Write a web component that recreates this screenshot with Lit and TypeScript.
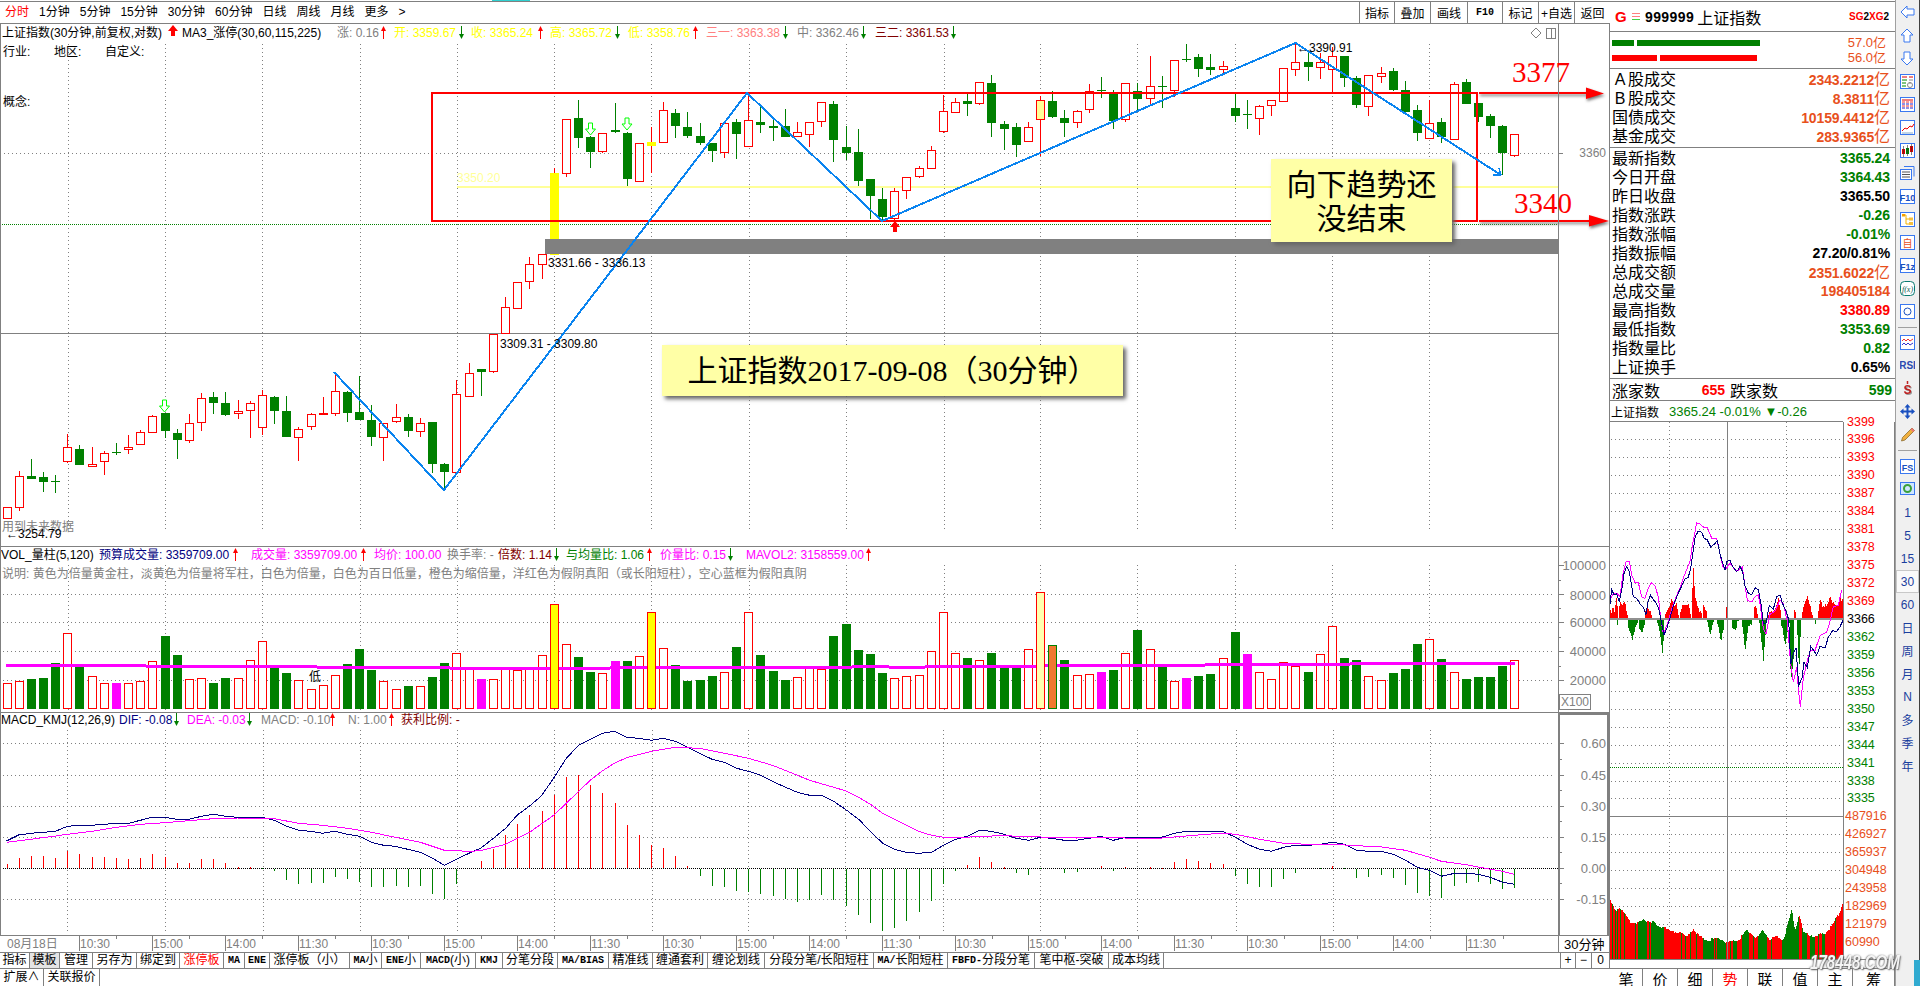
import { LitElement, html, svg, css } from "lit";
import { customElement } from "lit/decorators.js";

type C = [string, number, number, number, number];
// candles: [type, high, bodyTop, bodyBottom, low] measured at 3x the pixel height
const early: C[] = [
  ["r",532,532,565,565],["r",423,439,532,543],["g",387,438,446,446],["g",426,441,455,486],["g",435,453,455,488],
  ["r",312,352,395,400],["g",345,357,404,404],["r",351,403,409,409],["r",364,370,394,435],["g",339,366,369,375],
  ["r",316,352,358,372],["r",300,307,343,343],["r",255,259,307,307],["g",249,249,302,323],["g",297,309,329,387],
  ["r",252,280,331,338],["r",190,205,277,302],["g",186,201,218,252],["g",186,219,255,258],["r",210,244,250,267],
  ["r",213,220,241,324],["r",180,196,292,315],["g",199,201,242,282],["g",198,243,320,322],["r",292,296,319,393],
  ["r",250,253,289,300],["r",201,250,251,251],["r",130,184,250,258],["g",184,186,248,276],["g",139,246,269,270],
  ["g",225,270,320,348],["r",280,280,323,393],["r",222,262,275,280],["g",252,261,303,321],["r",265,280,304,321],
  ["g",276,276,402,430],["g",398,402,425,480],["r",151,193,428,430],["r",99,130,199,199],["g",118,118,125,197],
  ["r",13,13,124,128],
];
const later: C[] = [
  ["r",892,922,1000,1000],["r",847,847,925,925],["r",771,793,845,866],["r",763,763,793,836],["y",505,520,765,765],
  ["r",358,358,521,530],["g",300,354,413,444],["g",408,411,455,503],["r",400,400,455,458],["g",310,391,396,399],
  ["g",395,399,537,558],["r",430,430,545,545],["y",381,426,437,518],["r",306,331,426,430],["g",327,339,378,414],
  ["g",336,381,408,414],["g",369,408,430,434],["g",430,430,453,486],["r",370,370,458,474],["g",357,366,402,477],
  ["r",283,361,440,440],["g",320,366,375,399],["g",357,378,384,423],["g",327,378,411,411],["r",366,397,410,410],
  ["r",366,367,404,441],["r",307,307,365,381],["g",303,312,420,486],["g",378,441,459,481],["g",387,456,543,558],
  ["g",537,537,588,657],["g",564,597,651,660],["r",565,574,656,660],["r",532,532,571,597],["r",498,505,530,533],
  ["r",438,451,506,506],["r",285,334,395,398],["r",294,307,337,337],["g",282,303,312,348],["r",247,247,311,315],
  ["g",225,249,369,411],["g",363,372,387,450],["g",369,381,435,471],["r",366,381,423,426],["p",288,300,356,468],
  ["g",273,303,351,354],["g",330,354,369,411],["r",330,333,365,384],["r",252,273,326,339],["g",231,270,273,294],
  ["g",270,282,363,387],["r",248,249,358,366],["g",250,273,297,330],["r",168,259,296,312],["g",228,258,261,324],
  ["r",181,181,271,291],["g",132,177,180,186],["g",162,171,207,231],["g",162,201,210,225],["r",183,198,206,225],
  ["g",282,324,348,366],["g",300,342,345,387],["r",315,319,355,405],["r",300,301,317,348],["r",203,203,301,301],
  ["r",130,187,208,228],["g",160,187,201,243],["r",160,187,203,236],["r",140,169,208,280],["g",168,168,233,261],
  ["g",228,234,315,324],["r",226,226,320,348],["r",201,219,228,249],["g",205,213,270,272],["g",243,270,336,336],
  ["g",314,330,399,423],["r",300,369,414,414],["g",354,366,411,429],["r",246,252,416,416],["g",237,246,312,312],
  ["g",309,309,350,366],["g",342,348,378,414],["g",375,378,460,525],["r",402,402,466,470],
];
const candles: C[] = [...early.map((c): C => [c[0], c[1]+990, c[2]+990, c[3]+990, c[4]+990]), ...later];

const vols: [string, number][] = [
  ["r",1060],["r",1054],["g",1047],["g",1044],["g",999],["r",910],["g",1005],["r",1039],["r",1060],["m",1060],
  ["r",1060],["r",1054],["r",994],["g",918],["g",975],["r",1048],["r",1045],["g",1059],["g",1044],["r",1045],
  ["r",991],["r",934],["g",1012],["g",1029],["r",1051],["r",1078],["r",1066],["r",1036],["g",1002],["g",957],
  ["g",1020],["r",1054],["r",1078],["g",1068],["r",1069],["g",1041],["g",999],["r",970],["r",1017],["m",1047],
  ["r",1048],["r",1017],["r",1020],["r",1017],["r",976],["y",822],["r",943],["g",981],["g",1026],["r",1030],
  ["m",993],["g",993],["r",979],["y",846],["r",955],["g",1005],["g",1052],["g",1050],["g",1038],["r",1027],
  ["g",951],["r",847],["g",975],["g",1023],["g",1050],["r",1042],["r",1010],["r",1018],["g",918],["g",882],
  ["g",960],["g",972],["g",1029],["r",1045],["r",1039],["r",1036],["r",964],["r",847],["r",970],["g",984],
  ["r",991],["g",969],["g",1010],["g",1010],["r",958],["p",787],["o",945],["g",990],["r",1036],["r",1033],
  ["m",1026],["g",1020],["r",970],["g",900],["r",958],["g",1010],["r",1053],["m",1044],["g",1038],["g",1032],
  ["r",985],["g",906],["m",972],["r",1027],["r",1048],["r",997],["r",1009],["g",1026],["r",973],["r",889],
  ["g",984],["g",990],["r",1039],["r",1051],["g",1029],["g",1017],["g",942],["r",928],["g",987],["r",1027],
  ["g",1047],["g",1041],["g",1041],["g",1008],["r",991],
];
const volLine: [number, number, number][] = [
  [6,146,1006],[146,317,1009],[317,450,1012],[450,551,1015],[556,610,1015],[610,640,1012],
  [640,852,1012],[852,889,1009],[889,925,1012],[925,1037,1008],[1043,1205,1005],[1205,1350,1003],[1350,1515,1000],
];
const macdTips = [492,474,468,468,474,454,462,471,471,474,477,474,462,471,489,489,477,477,489,500,502,505,512,540,551,549,549,530,537,546,561,561,558,561,557,582,597,552,505,482,447,405,372,345,333,285,231,226,255,279,309,375,405,435,444,468,498,528,558,561,573,576,582,588,597,606,600,585,600,618,645,669,693,684,663,636,603,552,513,495,471,486,502,518,525,505,508,519,516,503,498,512,502,505,502,503,486,477,483,489,492,528,552,561,561,537,519,508,505,498,505,534,531,525,534,555,579,588,594,558,549,546,552,567,564];
const difA = [[13,423],[36,405],[60,400],[85,397],[109,394],[132,379],[156,376],[180,376],[204,373],[228,370],[252,370],[275,361],[298,352],[322,352],[346,358],[370,358],[395,349],[418,343],[442,349],[466,352],[490,352],[514,352],[538,361],[562,379],[585,391],[609,394],[632,400],[656,394],[681,403],[705,409],[728,427],[752,436],[775,439],[799,448],[824,457],[848,475],[871,496],[895,478],[919,460],[942,445],[967,415],[991,385],[1014,345],[1038,318],[1061,288],[1085,235],[1110,175],[1134,136],[1157,118],[1181,100],[1204,94],[1228,112],[1252,115],[1277,121],[1300,115],[1324,124],[1347,142],[1371,160],[1396,178],[1420,187],[1444,205],[1467,214],[1491,226],[1514,244],[1540,262],[1563,277]];
const difB = [[19,286],[42,286],[66,304],[89,328],[115,358],[138,394],[162,430],[185,448],[209,457],[232,460],[258,457],[281,436],[305,418],[328,409],[352,391],[375,394],[400,403],[424,415],[448,421],[471,412],[494,415],[518,421],[542,421],[566,415],[590,409],[614,421],[638,412],[661,412],[685,412],[709,412],[733,400],[757,394],[781,394],[805,394],[828,394],[854,412],[877,433],[901,448],[924,454],[948,442],[971,436],[996,436],[1020,433],[1044,427],[1068,433],[1091,451],[1114,454],[1140,454],[1163,463],[1187,481],[1210,502],[1234,511],[1257,529],[1283,520],[1306,520],[1330,523],[1353,532],[1377,547],[1400,553]];
const deaA = [[13,427],[60,418],[109,408],[132,403],[180,394],[228,382],[275,373],[322,368],[370,362],[418,356],[466,354],[514,354],[538,356],[585,370],[632,376],[681,385],[728,397],[775,412],[824,427],[871,451],[919,454],[942,452],[991,433],[1038,397],[1085,346],[1110,310],[1134,274],[1157,241],[1181,212],[1204,190],[1228,173],[1277,154],[1324,142],[1371,145],[1420,160],[1467,175],[1514,196],[1563,226]];
const deaB = [[19,241],[66,262],[89,272],[115,292],[138,313],[162,340],[185,358],[209,376],[232,394],[258,406],[281,412],[305,414],[352,409],[400,407],[448,410],[494,412],[542,414],[590,412],[638,414],[709,414],[757,408],[805,402],[828,400],[854,403],[901,418],[948,430],[996,433],[1044,433],[1091,437],[1140,441],[1187,451],[1234,472],[1257,484],[1306,494],[1353,508],[1377,514],[1400,523]];
const macdPts = (a: number[][], b: number[][]) => [
  ...a.map(p => `${(p[0]/1.96).toFixed(1)},${(700+p[1]/3).toFixed(1)}`),
  ...b.map(p => `${(800+p[0]/1.96).toFixed(1)},${(700+p[1]/3).toFixed(1)}`),
].join(" ");

const iNavy = [[30,490],[35,450],[42,465],[50,462],[58,485],[66,445],[72,405],[80,385],[88,400],[95,440],[100,470],[110,475],[120,490],[130,500],[138,520],[145,480],[152,466],[160,478],[170,490],[178,510],[188,560],[192,578],[200,560],[210,530],[222,490],[235,460],[245,440],[255,420],[265,415],[272,390],[278,350],[286,300],[295,285],[305,288],[312,305],[322,310],[332,330],[345,320],[352,312],[360,350],[368,375],[375,395],[380,370],[390,368],[398,385],[410,400],[420,385],[428,400],[435,440],[445,460],[455,465],[465,445],[475,450],[483,490],[490,545],[498,545],[508,495],[520,505],[530,470],[540,466],[548,490],[558,510],[566,535],[572,660],[580,630],[588,615],[596,720],[606,700],[612,655],[622,670],[632,610],[640,620],[650,635],[660,610],[675,615],[685,585],[698,565],[708,570],[720,555],[730,535]];
const iMag = [[30,480],[40,460],[50,460],[60,470],[68,410],[78,372],[88,370],[95,410],[105,430],[115,430],[125,470],[135,475],[145,445],[155,430],[165,440],[175,470],[182,530],[190,575],[205,540],[220,490],[240,445],[255,405],[270,370],[278,320],[290,262],[300,265],[312,275],[322,275],[335,305],[350,305],[358,340],[368,385],[378,392],[390,375],[405,395],[415,395],[427,385],[435,440],[442,480],[455,485],[465,470],[475,465],[480,490],[490,560],[498,575],[510,520],[525,510],[540,480],[550,490],[562,540],[572,660],[580,710],[590,670],[596,740],[601,780],[610,700],[622,650],[632,620],[645,622],[660,580],[680,570],[690,540],[700,498],[715,495],[725,450]];
const iX = (x: number) => 1600 + x / 3;
const iY = (y: number) => 430 + y / 2.82;
const iPts = (a: number[][]) => a.map(p => `${iX(p[0]).toFixed(1)},${iY(p[1]).toFixed(1)}`).join(" ");

const interp = (pts: number[][], x: number) => {
  for (let i = 0; i < pts.length - 1; i++) {
    if (x >= pts[i][0] && x <= pts[i+1][0]) {
      const t = (x - pts[i][0]) / ((pts[i+1][0] - pts[i][0]) || 1);
      return pts[i][1] + t * (pts[i+1][1] - pts[i][1]);
    }
  }
  return null;
};
const jit = (i: number) => Math.sin(i * 12.9898) * 43758.5453 % 1;

const redRegions = [
  [[30,495],[34,520],[38,500],[44,515],[50,470],[54,525]],
  [[58,490],[62,480],[66,495],[72,480],[78,505],[82,525]],
  [[135,520],[140,505],[150,505],[155,525]],
  [[195,520],[205,500],[215,480],[222,500],[230,490],[236,525]],
  [[240,510],[248,490],[256,495],[265,495],[272,525]],
  [[275,480],[280,390],[285,465],[292,490],[300,510],[306,525]],
  [[310,500],[318,510],[322,525]],
  [[378,490],[383,525]],
  [[462,500],[468,490],[473,525]],
  [[505,515],[512,505],[525,510],[535,480],[543,525]],
  [[582,510],[588,525]],
  [[605,515],[615,490],[622,475],[630,500],[640,525]],
  [[653,525],[660,480],[668,505],[680,490],[690,465],[700,490],[712,500],[720,480],[730,470]],
];
const greenRegions = [
  [[50,537],[53,555],[56,537]],
  [[85,555],[98,590],[106,560],[115,537]],
  [[115,565],[125,570],[135,545]],
  [[172,540],[180,575],[187,625],[192,575]],
  [[320,540],[330,580],[342,540]],
  [[352,540],[362,590],[372,560]],
  [[395,550],[405,560],[415,540]],
  [[425,540],[435,620],[445,550],[460,540]],
  [[478,540],[485,600],[490,645],[497,560]],
  [[543,540],[555,610],[565,560]],
  [[568,540],[572,715],[580,640]],
  [[590,540],[597,690],[603,540]],
  [[645,537],[647,568],[649,537]],
];
const volEnv = [[330,60],[345,90],[360,82],[375,105],[390,125],[410,130],[430,122],[455,125],[475,140],[495,140],[510,155],[540,155],[560,172],[580,145],[600,170],[620,180],[660,175],[680,187],[700,183],[720,175],[740,150],[770,175],[790,150],[810,178],[830,170],[850,178],[875,90],[885,150],[897,100],[910,160],[950,170],[980,155],[1000,130],[1020,95],[1028,65],[1030,25]];
const volGreen = [[415,440],[452,490],[610,640],[650,678],[700,710],[725,745],[775,800],[845,895],[905,920],[930,945],[965,975]];
const volStripes = [336,345,352,360,372,405,448,545,555,572,590,645,690,760,815,955,1005];

const legendMain: [number, string, string][] = [
  [2,"上证指数(30分钟,前复权,对数)","k"],[182,"MA3_涨停(30,60,115,225)","k"],[337,"涨: 0.16","a"],
  [394,"开: 3359.67","y"],[471,"收: 3365.24","y"],[550,"高: 3365.72","y"],[628,"低: 3358.76","y"],
  [706,"三一: 3363.38","s"],[797,"中: 3362.46","a"],[875,"三二: 3361.53","d"],
];
const legendVol: [number, string, string][] = [
  [1,"VOL_量柱(5,120)","k"],[99,"预算成交量: 3359709.00","n"],[251,"成交量: 3359709.00","m"],[374,"均价: 100.00","m"],
  [447,"换手率: -","a"],[498,"倍数: 1.14","d"],[566,"与均量比: 1.06","g"],[660,"价量比: 0.15","m"],[746,"MAVOL2: 3158559.00","m"],
];
const legendMacd: [number, string, string][] = [
  [1,"MACD_KMJ(12,26,9)","k"],[119,"DIF: -0.08","n"],[187,"DEA: -0.03","m"],[261,"MACD: -0.10","a"],[348,"N: 1.00","a"],[401,"获利比例: -","d"],
];
const gridX = [68,165,262,360,457,554,651,749,846,944,1040,1137,1235,1332,1429];
const gapA = [79,152,225,298,371,444,517,590,663,736,809,882,955,1028,1101,1174,1247,1320,1393,1466];
const timeL = ["10:30","15:00","14:00","11:30","10:30","15:00","14:00","11:30","10:30","15:00","14:00","11:30","10:30","15:00","14:00","11:30","10:30","15:00","14:00","11:30"];

const tabs1: [string, number, string?][] = [
  ["指标",30],["模板",30,"sel"],["管理",33],["另存为",44],["绑定到",43],["涨停板",44,"red"],["MA",21],["ENE",25],["涨停板（小）",80],
  ["MA小",32],["ENE小",39],["MACD(小)",55],["KMJ",27],["分笔分段",55],["MA/BIAS",51],["精准线",44],["缠通套利",55],["缠论划线",57],
  ["分段分笔/长阳短柱",109],["MA/长阳短柱",74],["FBFD-分段分笔",87],["笔中枢-突破",74],["成本均线",55],
];
const navItems = ["1分钟","5分钟","15分钟","30分钟","60分钟","日线","周线","月线","更多"];
const rightBtns: [string, number][] = [["指标",35],["叠加",36],["画线",37],["F10",35],["标记",36],["+自选",36],["返回",36]];

const rows1: [string, string, string][] = [["A","股成交","2343.2212"],["B","股成交","8.3811"],["","国债成交","10159.4412"],["","基金成交","283.9365"]];
const rows2: [string, string, string][] = [
  ["最新指数","3365.24","gr"],["今日开盘","3364.43","gr"],["昨日收盘","3365.50","bk"],["指数涨跌","-0.26","gr"],["指数涨幅","-0.01%","gr"],
  ["指数振幅","27.20/0.81%","bk"],["总成交额","2351.6022亿","or"],["总成交量","198405184","or"],["最高指数","3380.89","rd"],["最低指数","3353.69","gr"],
  ["指数量比","0.82","gr"],["上证换手","0.65%","bk"],
];
const priceL = ["3399","3396","3393","3390","3387","3384","3381","3378","3375","3372","3369","3366","3362","3359","3356","3353","3350","3347","3344","3341","3338","3335"];
const volL = ["487916","426927","365937","304948","243958","182969","121979","60990"];
const sideLabels = ["1","5","15","30","60","日","周","月","N","多","季","年"];

const cxOf = (i: number) => Math.round(6.5 + 12.16 * i);
const up = (x: number, y: number, c = "#f00") => svg`<path d="M${x+.5} ${y+6}V${y-5}" stroke=${c} fill="none"/><path d="M${x-2} ${y-2}L${x+.5} ${y-7}L${x+3} ${y-2}Z" fill=${c}/>`;
const dn = (x: number, y: number, c = "#008000") => svg`<path d="M${x+.5} ${y-7}V${y+4}" stroke=${c} fill="none"/><path d="M${x-2} ${y+1}L${x+.5} ${y+6}L${x+3} ${y+1}Z" fill=${c}/>`;
const thick = (x: number, y: number) => svg`<path d="M${x} ${y}l5 6h-3v5h-4v-5h-3z" fill="#f00"/>`;
const hollow = (x: number, y: number) => svg`<path d="M${x-2} ${y-6}h4v6h3l-5 6l-5-6h3z" fill="#fff" stroke="#0f0"/>`;
const legendText = (l: [number, string, string][], y: number) => l.map(([x, t, c]) => svg`<text x=${x} y=${y} class="t ${c}">${t}</text>`);

const icons = [
  svg`<path d="M1 7l6-6v3h7v6H7v3z" fill="#fff" stroke="#3a78f0"/>`,
  svg`<path d="M7 1l6 6h-3v7H4V7H1z" fill="#fff" stroke="#3a78f0"/>`,
  svg`<path d="M7 14l6-6h-3V1H4v7H1z" fill="#fff" stroke="#3a78f0"/>`,
  svg`<rect x=".5" y=".5" width="14" height="14" fill="#fff" stroke="#3a78f0"/><path d="M2 3h5M9 3h4" stroke="#d00"/><path d="M2 6h5M2 9h4M2 12h4" stroke="#080"/><path d="M9 6h4M9 9h2" stroke="#888"/><circle cx="10" cy="11" r="2.5" fill="none" stroke="#888"/>`,
  svg`<rect x=".5" y=".5" width="14" height="14" fill="#fff" stroke="#3a78f0"/><path d="M2 3h11" stroke="#d00"/><path d="M2 5h3M6 5h3M10 5h3M2 9h3M6 9h3M10 9h3" stroke="#e33"/><path d="M2 7h3M6 7h3M10 7h3M2 11h3M6 11h3M10 11h3" stroke="#22c"/>`,
  svg`<rect x=".5" y=".5" width="14" height="14" fill="#fff" stroke="#3a78f0"/><path d="M2 11l3-3 2 1 3-3 2 1 2-3" fill="none" stroke="#e00"/><path d="M2 13h11" stroke="#8ac"/>`,
  svg`<rect x=".5" y=".5" width="14" height="14" fill="#fff" stroke="#3a78f0"/><rect x="2" y="6" width="3" height="5" fill="#d00"/><rect x="6" y="5" width="3" height="6" fill="#080"/><rect x="10" y="3" width="3" height="6" fill="#d00"/><path d="M3.5 3v11M7.5 2v11M11.500 1v11" stroke="#333" stroke-width=".6"/>`,
  svg`<path d="M4 .5h10v10" fill="none" stroke="#3a78f0"/><rect x=".5" y="3.500" width="11" height="10" fill="#fff" stroke="#3a78f0"/><path d="M2 6h8M2 8.500h8M2 11h8" stroke="#555"/>`,
  svg`<rect x=".5" y=".5" width="14" height="14" fill="#fff" stroke="#3a78f0"/><text x="7.500" y="11.500" text-anchor="middle" class="ic">F10</text>`,
  svg`<rect x=".5" y=".5" width="14" height="14" fill="#fff" stroke="#3a78f0"/><path d="M3 3h3v9h5M6 7h5" fill="none" stroke="#f5b400"/><rect x="2" y="2" width="3" height="2.500" fill="#f5a000"/><rect x="9" y="5.500" width="4" height="3" fill="#f5c040"/><rect x="9" y="10" width="4" height="3" fill="#f5c040"/>`,
  svg`<rect x=".5" y=".5" width="14" height="14" fill="#fff" stroke="#3a78f0"/><text x="7.500" y="11.500" text-anchor="middle" class="io">自</text>`,
  svg`<rect x=".5" y=".5" width="14" height="14" fill="#fff" stroke="#3a78f0"/><text x="7.500" y="11.500" text-anchor="middle" class="ic">F1z</text>`,
  svg`<rect x=".5" y=".5" width="14" height="14" rx="4" fill="#fff" stroke="#0a7a70"/><text x="7.500" y="11" text-anchor="middle" class="if">f(x)</text>`,
  svg`<rect x=".5" y=".5" width="14" height="14" fill="#fff" stroke="#3a78f0"/><circle cx="7.500" cy="7.500" r="3.500" fill="none" stroke="#1a50c0"/>`,
];
const icons2 = [
  svg`<rect x=".5" y=".5" width="14" height="14" fill="#fff" stroke="#3a78f0"/><path d="M2 6l2-2 2 2 2-2 2 2 3-2" fill="none" stroke="#e33"/><path d="M2 10l2-2 2 2 2-2 2 2 3-2" fill="none" stroke="#33c"/>`,
  svg`<text x="7.500" y="11" text-anchor="middle" class="ir">RSI</text>`,
  svg`<path d="M7.500 0v3" stroke="#c02020" stroke-width="1.500"/><text x="7.500" y="12.500" text-anchor="middle" class="is">S</text>`,
  svg`<path d="M7.500 0l3 3.500h-2v3h3v-2l3.500 3-3.500 3v-2h-3v3h2l-3 3.500-3-3.500h2v-3h-3v2L0 7.500l3.500-3v2h3v-3h-2z" fill="#1a50c0"/>`,
  svg`<path d="M12 1l2.500 2.500L5 13l-3.500 1L2.500 10.500z" fill="#f0b040" stroke="#806020" stroke-width=".7"/><path d="M12 1l2.500 2.500-1.500 1.500L10.500 2.500z" fill="#e77"/>`,
];
const icons3 = [
  svg`<rect x=".5" y=".5" width="14" height="14" fill="#fff" stroke="#3a78f0"/><text x="7.500" y="11.500" text-anchor="middle" class="ic">FS</text>`,
  svg`<rect x=".5" y=".5" width="14" height="12" fill="#cfe6ff" stroke="#3a78f0"/><circle cx="7.500" cy="6.500" r="3.500" fill="none" stroke="#3aa03a" stroke-width="2"/>`,
];
const ic = (p: unknown) => html`<div class="tool"><svg width="15" height="15" viewBox="0 0 15 15">${p}</svg></div>`;

const latin = (t: string) => t.split(/([A-Za-z0-9][A-Za-z0-9/\-]*)/).map((s, i) => i % 2 ? html`<span class="lat">${s}</span>` : s);

@customElement("app-root")
export class AppRoot extends LitElement {
  static styles = css`
    :host { display: block; width: 1920px; height: 986px; overflow: hidden; background: #fff; color: #000; font: 12px "Liberation Sans", "Noto Sans CJK SC", sans-serif; }
    .root { position: relative; display: grid; grid-template-columns: 1610px 285px 25px; height: 986px; }
    .left { display: flex; flex-direction: column; min-width: 0; }
    .top { height: 23px; margin-top: 1px; border-top: 1px solid #808080; border-bottom: 1px solid #808080; box-sizing: border-box; display: flex; align-items: center; justify-content: space-between; padding-left: 5px; }
    .nav { display: flex; gap: 10px; align-items: center; font-size: 12px; line-height: 21px; }
    .nav .on { color: #f00; }
    .btns { display: flex; height: 100%; }
    .btn { box-sizing: border-box; display: flex; align-items: center; justify-content: center; border-left: 1px solid #808080; height: 100%; }
    .lat { font: bold 10px "Liberation Mono", monospace; }
    .pane { position: relative; display: block; }
    .pane svg { display: block; overflow: visible; }
    .main { height: 523px; }
    .vol { height: 166px; }
    .macd { height: 223px; }
    .ax { height: 16px; }
    svg text { font-family: "Liberation Sans", "Noto Sans CJK SC", sans-serif; font-size: 12px; }
    svg text.fs13 { font-size: 13px; }
    svg text.fs125 { font-size: 12.500px; }
    .t { dominant-baseline: central; }
    .k { fill: #000; } .a { fill: #808080; } .y { fill: #ff0; } .s { fill: #ff8080; } .d { fill: #800000; } .n { fill: #000080; } .m { fill: #f0f; } .g { fill: #008000; } .o { fill: #e8501c; } .r { fill: #f00; } .py { fill: #ffff99; }
    .dot { stroke: #808080; stroke-dasharray: 1 3; fill: none; shape-rendering: crispEdges; }
    .dotg { stroke: #008000; stroke-dasharray: 1 1; fill: none; shape-rendering: crispEdges; }
    .dotk { stroke: #000; stroke-dasharray: 1 1; fill: none; shape-rendering: crispEdges; }
    .crisp { shape-rendering: crispEdges; }
    .big { font-family: "Liberation Serif", serif !important; font-size: 29px !important; fill: #f00; }
    .shadow { filter: drop-shadow(1px 2px 1.500px #777); }
    .note { position: absolute; box-sizing: border-box; background: #ffffa6; box-shadow: 3px 3px 4px #666; display: flex; align-items: center; justify-content: center; text-align: center; font: 30px/34px "Liberation Serif", "Noto Sans CJK SC", serif; color: #000; }
    .n1 { left: 662px; top: 321px; width: 461px; height: 51px; }
    .n2 { left: 1271px; top: 135px; width: 181px; height: 83px; padding-top: 3px; }
    .tabs { display: flex; height: 17px; box-sizing: border-box; border-top: 1px solid #808080; border-bottom: 1px solid #808080; }
    .tabs2 { height: 17px; border-top: 0; border-bottom: 0; }
    .tab { box-sizing: border-box; display: flex; align-items: center; justify-content: center; border-right: 1px solid #808080; white-space: nowrap; line-height: 15px; }
    .tab.sel { background: #e4e4e4; }
    .tab.red { color: #f00; }
    .tab.pl { border-left: 1px solid #808080; }
    .pm { margin-left: auto; display: flex; height: 100%; }
    .w16 { width: 16px; } .w18 { width: 18px; } .w44 { width: 44px; } .w56 { width: 56px; }
    .panel { display: flex; flex-direction: column; min-width: 0; }
    .ph { box-sizing: border-box; height: 31px; margin-top: 1px; border-top: 1px solid #808080; border-bottom: 1px solid #808080; display: flex; align-items: center; padding: 0 6px 0 5px; }
    .ph .G { color: #f00; font-weight: bold; font-size: 15px; width: 17px; }
    .ph .lines { width: 8px; margin-right: 5px; display: flex; flex-direction: column; gap: 2px; }
    .ph .lines i { display: block; height: 1px; background: #ff8080; }
    .ph .lines i:last-child { background: #40d040; }
    .ph .code { font: bold 14px "Liberation Sans", sans-serif; margin-right: 3px; letter-spacing: .4px; }
    .ph .name { font-size: 16px; }
    .ph .sg { margin-left: auto; font: bold 10px "Liberation Sans", sans-serif; }
    .ph .sg b { color: #f00; }
    .bars { box-sizing: border-box; height: 37px; border-bottom: 1px solid #808080; display: grid; grid-template-columns: 1fr auto; padding: 7px 9px 0 2px; row-gap: 1px; }
    .bar { display: flex; gap: 3px; height: 6px; margin-top: 1px; margin-bottom: 7px; }
    .bar i { display: block; height: 6px; }
    .bar .b1 { width: 22px; background: #008000; } .bar .b2 { width: 123px; background: #008000; }
    .bar .b3 { width: 45px; background: #f00; } .bar .b4 { width: 97px; background: #f00; }
    .yi { color: #e8501c; font-size: 13px; line-height: 14px; margin-top: -3px; }
    .sec { box-sizing: border-box; border-bottom: 1px solid #808080; }
    .s1 { height: 79px; padding-top: 1px; }
    .s2 { height: 231px; padding-top: 1px; }
    .row { height: 19px; display: flex; align-items: center; justify-content: space-between; padding: 0 5px 0 2px; font-size: 16px; line-height: 19px; }
    .row .v { font: bold 14px/19px "Liberation Sans", "Noto Sans CJK SC", sans-serif; letter-spacing: -.1px; }
    .row .y16 { display: inline-block; font: 16px/19px "Noto Sans CJK SC", sans-serif; }
    .wide { display: inline-block; width: 16px; text-align: center; }
    .gr { color: #008000; } .bk { color: #000; } .or { color: #e8501c; } .rd { color: #f00; }
    .s3 { height: 22px; display: flex; align-items: center; padding: 0 3px 0 2px; font-size: 16px; }
    .s3 b { font: bold 14px "Liberation Sans", sans-serif; }
    .s3 .n655 { width: 65px; text-align: right; color: #f00; margin-right: 5px; }
    .s3 .n599 { margin-left: auto; color: #008000; }
    .s4 { height: 21px; border-bottom: 0; display: flex; align-items: center; padding-left: 1px; font-size: 12px; }
    .s4 .g1 { color: #008000; margin-left: 10px; font-size: 13px; }
    .chart { height: 547px; }
    .pt { display: flex; height: 18px; border-top: 0; }
    .pt div { box-sizing: border-box; border-right: 1px solid #808080; display: flex; align-items: center; justify-content: center; font-size: 15px; }
    .pt .on { color: #f00; }
    .w33 { width: 33px; } .w35 { width: 35px; } .w42 { width: 42px; }
    .side { background: #f0f0f0; border-left: 1px solid #a0a0a0; border-right: 1px solid #404040; box-sizing: border-box; display: flex; flex-direction: column; align-items: center; padding-top: 1px; }
    .tool { height: 23px; width: 100%; display: flex; align-items: center; justify-content: center; color: #1a3e9e; font-size: 12px; flex: none; }
    .tool.sel { background: #fafafa; box-shadow: inset 0 0 0 1px #c8c8c8; }
    .sep { flex: none; width: 19px; height: 1px; background: #a0a0a0; }
    .s8 { margin: 4px 0 3px; } .s9 { margin: 4px 0 4px; }
    .ic { font: bold 9px "Liberation Sans", sans-serif !important; fill: #1a50c0; }
    .io { font-size: 10px !important; fill: #e8501c; }
    .if { font: italic 8px "Liberation Serif", serif !important; fill: #0a5a50; }
    .ir { font: bold 10px "Liberation Sans", sans-serif !important; fill: #2a4ab0; }
    .is { font: bold 12px "Liberation Sans", sans-serif !important; fill: #c02020; filter: drop-shadow(1px 1px 0 #999); }
    .wm { position: absolute; left: 1810px; top: 949px; font: italic bold 21px/25px "Liberation Sans", sans-serif; color: #f4f4f4; text-shadow: 1px 1px 2px #555, -1px 0 2px #888; white-space: nowrap; transform: scaleX(.72); transform-origin: left center; }
    .corner { position: absolute; left: 1914px; top: 960px; width: 6px; height: 26px; background: #30aad0; }
    .cyan { position: absolute; left: 492px; top: 0; width: 38px; height: 1px; background: #30d0d0; }
  `;

  private renderMain() {
    return html`<div class="pane main">
      <svg width="1610" height="523" viewBox="0 24 1610 523">
        ${svg`<path class="dot" d="M4 153.500H1555"/>
        ${gridX.map(x => svg`<path class="dot" d="M${x+.5} 44V532"/>`)}
        <path class="dotg" d="M0 224.500H1558"/>
        <rect class="crisp" x="0" y="333" width="1558" height="1" fill="#808080"/>
        <rect class="crisp" x="457" y="186" width="1101" height="2" fill="#ffff99"/>
        ${candles.map((c, i) => {
          const x = cxOf(i); const [t, h, a, b, l] = c;
          const hi = h/3, top = a/3, bot = b/3, lo = l/3;
          const wc = t === "g" ? "#008000" : "#f00";
          const wick = svg`<path class="crisp" d="M${x+.5} ${hi}V${top}M${x+.5} ${bot}V${lo}" stroke=${wc} fill="none"/>`;
          if (t === "g") return svg`${wick}<rect class="crisp" x=${x-4} y=${top} width="9" height=${Math.max(1, bot-top)} fill="#008000"/>`;
          if (t === "y") return svg`${wick}<rect class="crisp" x=${x-4} y=${top} width="9" height=${Math.max(1, bot-top)} fill="#ff0"/>`;
          return svg`${wick}<rect class="crisp" x=${x-3.5} y=${Math.round(top)+.5} width="8" height=${Math.max(1, Math.round(bot-top))} fill=${t === "p" ? "#ffff99" : "#fff"} stroke="#f00"/>`;
        })}
        ${hollow(590.5,129)}${hollow(627,124)}${hollow(164.5,406)}
        ${thick(895,221)}${thick(173,25)}
        <rect class="crisp" x="545" y="239" width="1013" height="15" fill="#808080"/>
        <rect class="crisp" x="431" y="92" width="1047" height="2" fill="#f00"/>
        <rect class="crisp" x="431" y="220" width="1047" height="2" fill="#f00"/>
        <rect class="crisp" x="431" y="92" width="2" height="130" fill="#f00"/>
        <rect class="crisp" x="1476" y="92" width="2" height="130" fill="#f00"/>
        <polyline class="crisp" points="334,372 444,490 747,93 882,221 1295.500,43 1501,175" fill="none" stroke="#0a84f0" stroke-width="2"/>
        <path class="crisp" d="M1501 175l-2-7M1501 175l-8 0" fill="none" stroke="#0a84f0" stroke-width="1.500"/>
        <g class="shadow">
          <path d="M1479 93H1588" stroke="#f00" stroke-width="2"/><path d="M1586 87.500L1604 93.500L1586 99Z" fill="#f00"/>
          <path d="M1479 221H1592" stroke="#f00" stroke-width="2"/><path d="M1589 215L1609 221L1589 226.500Z" fill="#f00"/>
        </g>
        <rect class="crisp" x="0" y="24" width="1" height="523" fill="#808080"/>
        <rect class="crisp" x="1558" y="24" width="1" height="523" fill="#808080"/>
        <rect class="crisp" x="1609" y="24" width="1" height="523" fill="#808080"/>
        <rect class="crisp" x="0" y="546" width="1610" height="1" fill="#808080"/>
        ${legendText(legendMain, 33)}
        ${up(383,33)}${dn(461,33)}${up(540,33)}${dn(617,33)}${up(695,33)}${dn(785,33)}${dn(863,33)}${dn(953,33)}
        <text x="3" y="52" class="t k">行业:</text><text x="54" y="52" class="t k">地区:</text><text x="105" y="52" class="t k">自定义:</text>
        <text x="3" y="102" class="t k">概念:</text>
        <text x="457" y="178" class="t py">3350.20</text>
        <text x="548" y="263" class="t k">3331.66 - 3336.13</text>
        <text x="500" y="343.500" class="t k">3309.31 - 3309.80</text>
        <text x="1297" y="48" class="t k">←3390.91</text>
        <text x="2" y="527" class="t a">用到未来数据</text>
        <text x="6" y="534" class="t k">←3254.79</text>
        <text x="1606" y="153" class="t a" text-anchor="end">3360</text>
        <path class="crisp" d="M1559 153.500h4" stroke="#808080"/>
        <text x="1512" y="82" class="big">3377</text>
        <text x="1514" y="213" class="big">3340</text>
        <path d="M1536 28l5 5-5 5-5-5z" fill="#fff" stroke="#808080"/>
        <path class="crisp" d="M1546.500 28.500h9v10h-9zM1551 28.500v10" fill="#fff" stroke="#808080"/>`}
      </svg>
      <div class="note n1">上证指数2017-09-08（30分钟）</div>
      <div class="note n2">向下趋势还<br />没结束</div>
    </div>`;
  }

  private renderVol() {
    const bar = (v: [string, number], i: number) => {
      const x = cxOf(i); const y = Math.round(330 + v[1]/3); const h = 709 - y;
      if (v[0] === "g") return svg`<rect class="crisp" x=${x-4} y=${y} width="9" height=${h} fill="#008000"/>`;
      if (v[0] === "m") return svg`<rect class="crisp" x=${x-4} y=${y} width="9" height=${h} fill="#f0f"/>`;
      return svg`<rect class="crisp" x=${x-3.5} y=${y+.5} width="8" height=${h-1} fill="#fff" stroke="#f00"/>`;
    };
    const special = (v: [string, number], i: number) => {
      const x = cxOf(i); const y = Math.round(330 + v[1]/3); const h = 709 - y;
      if (v[0] === "y") return svg`<rect class="crisp" x=${x-3.5} y=${y+.5} width="8" height=${h-1} fill="#ff0" stroke="#f00"/>`;
      if (v[0] === "p") return svg`<rect class="crisp" x=${x-3.5} y=${y+.5} width="8" height=${h-1} fill="#ffffb0" stroke="#f00"/>`;
      if (v[0] === "o") return svg`<rect class="crisp" x=${x-3.5} y=${y+.5} width="8" height=${h-1} fill="#f07830" stroke="#008000"/>`;
      return null;
    };
    return html`<div class="pane vol">
      <svg width="1610" height="166" viewBox="0 547 1610 166">
        ${svg`${[594,622,651,680].map(y => svg`<path class="dot" d="M3 ${y+.5}H1555"/>`)}
        ${gridX.map(x => svg`<path class="dot" d="M${x+.5} 565V711"/>`)}
        ${vols.map(bar)}
        ${volLine.map(([a, b, z]) => { const y = 330 + z/3; return svg`<rect class="crisp" x=${a} y=${Math.round(y)-1} width=${b-a} height="3" fill="#f0f"/>`; })}
        ${vols.map(special)}
        ${legendText(legendVol, 555)}
        ${up(235,555)}${up(363,555)}${dn(556,555)}${up(649,555)}${dn(730,555)}${up(868,555)}
        <text x="2" y="574" class="t a">说明: 黄色为倍量黄金柱，淡黄色为倍量将军柱，白色为倍量，白色为百日低量，橙色为缩倍量，洋红色为假阴真阳（或长阳短柱），空心蓝框为假阳真阴</text>
        <text x="309" y="677" class="t k">低</text>
        ${[["100000",565],["80000",595],["60000",622],["40000",651],["20000",680]].map(([t, y]) => svg`<text x="1606" y=${y} class="t a fs13" text-anchor="end">${t}</text>`)}
        ${[565,580,594,608,622,637,651,666,680].map((y, i) => svg`<path class="crisp" d="M1559 ${y+.5}h${i % 2 ? 2 : 5}" stroke="#808080"/>`)}
        <rect class="crisp" x="1559.500" y="694.500" width="31" height="15" fill="#fff" stroke="#808080"/>
        <text x="1575" y="702" class="t a" text-anchor="middle">X100</text>
        <rect class="crisp" x="0" y="547" width="1" height="166" fill="#808080"/>
        <rect class="crisp" x="1558" y="547" width="1" height="166" fill="#808080"/>
        <rect class="crisp" x="1609" y="547" width="1" height="166" fill="#808080"/>
        <rect class="crisp" x="0" y="712" width="1610" height="1" fill="#808080"/>`}
      </svg>
    </div>`;
  }

  private renderMacd() {
    return html`<div class="pane macd">
      <svg width="1610" height="223" viewBox="0 713 1610 223">
        ${svg`${[743,775,806,837,899].map(y => svg`<path class="dot" d="M3 ${y+.5}H1555"/>`)}
        ${[67,165,263,360,457,554,652,748,845,943,1040,1137,1236,1333,1430].map(x => svg`<path class="dot" d="M${x+.5} 730V933"/>`)}
        ${macdTips.map((z, i) => {
          const x = cxOf(i) + .5; const y = 700 + z/3;
          return svg`<path class="crisp" d="M${x} 868.500V${y}" stroke=${z < 505 ? "#f00" : "#008000"} fill="none"/>`;
        })}
        <path class="dotk" d="M3 868.500H1558"/>
        <polyline class="crisp" points=${macdPts(difA, difB)} fill="none" stroke="#000080" stroke-width="1"/>
        <polyline class="crisp" points=${macdPts(deaA, deaB)} fill="none" stroke="#f0f" stroke-width="1"/>
        ${legendText(legendMacd, 720)}
        ${dn(176,720)}${dn(249,720)}${up(332,720)}${up(391,720)}
        ${[["0.60",743],["0.45",775],["0.30",806],["0.15",837],["0.00",868],["-0.15",899]].map(([t, y]) => svg`<text x="1606" y=${y} class="t a fs13" text-anchor="end">${t}</text>`)}
        ${[743,759,775,790,806,821,837,852,868,883,899].map((y, i) => svg`<path class="crisp" d="M1560 ${y+.5}h${i % 2 ? 2 : 4}" stroke="#808080"/>`)}
        <rect class="crisp" x="0" y="713" width="1" height="223" fill="#808080"/>
        <rect class="crisp" x="1558" y="713" width="2" height="223" fill="#808080"/>
        <rect class="crisp" x="1607" y="713" width="3" height="223" fill="#808080"/>
        <rect class="crisp" x="1558" y="713" width="52" height="2" fill="#808080"/>
        <rect class="crisp" x="0" y="935" width="1610" height="1" fill="#808080"/>`}
      </svg>
    </div>`;
  }

  private renderAxis() {
    return html`<div class="pane ax">
      <svg width="1610" height="16" viewBox="0 936 1610 16">
        ${svg`<text x="7" y="944" class="t a">08月18日</text>
        ${gapA.map((x, i) => svg`<path class="crisp" d="M${x+.5} 936V951M${x+37} 936v3" stroke="#808080"/><text x=${x+1} y="944" class="t a">${timeL[i]}</text>`)}
        <text x="1564" y="944" class="t k fs13">30分钟</text>
        <rect class="crisp" x="1558" y="936" width="1" height="16" fill="#808080"/>
        <rect class="crisp" x="1609" y="936" width="1" height="16" fill="#808080"/>`}
      </svg>
    </div>`;
  }

  private renderChart() {
    const ys = [...priceL, ...volL].map((_, i) => 421.5 + 17.95 * i);
    const colBars: unknown[] = [];
    for (let px = 1610; px < 1843; px++) {
      const xz = (px - 1600) * 3 + 1;
      const get = (rs: number[][][]) => { for (const r of rs) { const v = interp(r, xz); if (v !== null) return v; } return null; };
      const r = get(redRegions);
      if (r !== null) { const t = iY(r) + jit(px) * 2.5; colBars.push(svg`<rect class="crisp" x=${px} y=${t} width="1" height=${Math.max(0, iY(533) - t)} fill="#f00"/>`); }
      const g = get(greenRegions);
      if (g !== null) { const b = iY(g) + jit(px + 7) * 2.5; colBars.push(svg`<rect class="crisp" x=${px} y=${iY(534)} width="1" height=${Math.max(0, b - iY(534))} fill="#008000"/>`); }
      const zx = (px - 1500) * 3 + 1;
      const e = interp(volEnv, zx);
      if (e !== null) {
        const top = 880 + e/3 + jit(px + 3) * 1.500;
        const green = volGreen.some(([a, b]) => zx >= a && zx <= b) || volStripes.some(s => Math.abs(s - zx) <= 1);
        colBars.push(svg`<rect class="crisp" x=${px} y=${top} width="1" height=${959 - top} fill=${green ? "#008000" : "#f00"}/>`);
      }
    }
    return html`<div class="pane chart">
      <svg width="285" height="547" viewBox="1610 422 285 547">
        ${svg`<rect class="crisp" x="1610" y="421" width="233" height="1" fill="#808080"/>
        ${ys.slice(1).map(y => svg`<path class="dot" d="M1611 ${Math.round(y)+.5}H1842"/>`)}
        <path class="dot" d="M1669.500 422V959M1786.500 422V959"/>
        ${colBars}
        <rect class="crisp" x="1727" y="421" width="1" height="538" fill="#808080"/>
        <rect class="crisp" x="1610" y="618" width="233" height="2" fill="#909090"/>
        <path class="dotg" d="M1610 767.500H1843"/>
        <rect class="crisp" x="1610" y="816" width="233" height="1" fill="#808080"/>
        <rect class="crisp" x="1610" y="959" width="285" height="1" fill="#808080"/>
        <rect class="crisp" x="1843" y="422" width="1" height="538" fill="#808080"/>
        <rect class="crisp" x="1610" y="968" width="285" height="1" fill="#808080"/>
        <rect class="crisp" x="1894" y="422" width="1" height="547" fill="#808080"/>
        <polyline class="crisp" points=${iPts(iMag)} fill="none" stroke="#f0f" stroke-width="1"/>
        <polyline class="crisp" points=${iPts(iNavy)} fill="none" stroke="#000080" stroke-width="1"/>
        ${priceL.map((t, i) => svg`<text x="1847" y=${ys[i]} class="t fs125 ${i < 11 ? "r" : i === 11 ? "k" : "g"}">${t}</text>`)}
        ${volL.map((t, i) => svg`<text x="1845" y=${ys[22 + i]} class="t fs125 o">${t}</text>`)}`}
      </svg>
    </div>`;
  }

  render() {
    return html`<div class="root">
      <div class="cyan"></div>
      <div class="left">
        <div class="top">
          <div class="nav"><span class="on">分时</span>${navItems.map(n => html`<span>${n}</span>`)}<span>&gt;</span></div>
          <div class="btns">${rightBtns.map(([t, w]) => html`<div class="btn" style="width:${w}px">${t === "F10" ? latin(t) : t}</div>`)}</div>
        </div>
        ${this.renderMain()}${this.renderVol()}${this.renderMacd()}${this.renderAxis()}
        <div class="tabs">
          ${tabs1.map(([t, w, c]) => html`<div class="tab ${c ?? ""}" style="width:${w}px">${latin(t)}</div>`)}
          <div class="pm">
            <div class="tab w16 pl">+</div><div class="tab w16">−</div><div class="tab w18">0</div>
          </div>
        </div>
        <div class="tabs tabs2">
          <div class="tab w44">扩展∧</div><div class="tab w56">关联报价</div>
        </div>
      </div>
      <div class="panel">
        <div class="ph">
          <span class="G">G</span><span class="lines"><i></i><i></i><i></i></span>
          <span class="code">999999</span><span class="name">上证指数</span>
          <span class="sg"><b>SG</b>2<b>XG</b>2</span>
        </div>
        <div class="bars">
          <div class="bar"><i class="b1"></i><i class="b2"></i></div><div class="yi">57.0亿</div>
          <div class="bar"><i class="b3"></i><i class="b4"></i></div><div class="yi">56.0亿</div>
        </div>
        <div class="sec s1">
          ${rows1.map(([a, l, v]) => html`<div class="row"><span>${a ? html`<span class="wide">${a}</span>` : ""}${l}</span><span class="v or">${v}<span class="y16">亿</span></span></div>`)}
        </div>
        <div class="sec s2">
          ${rows2.map(([l, v, c]) => html`<div class="row"><span>${l}</span><span class="v ${c}">${v.endsWith("亿") ? html`${v.slice(0, -1)}<span class="y16">亿</span>` : v}</span></div>`)}
        </div>
        <div class="sec s3"><span>涨家数</span><b class="n655">655</b><span>跌家数</span><b class="n599">599</b></div>
        <div class="sec s4"><span>上证指数</span><span class="g1">3365.24 -0.01% ▼-0.26</span></div>
        ${this.renderChart()}
        <div class="pt">
          <div class="w33">笔</div><div class="w35">价</div><div class="w35">细</div><div class="w35 on">势</div><div class="w35">联</div><div class="w35">值</div><div class="w35">主</div><div class="w42">筹</div>
        </div>
      </div>
      <div class="side">
        ${icons.map(ic)}
        <div class="sep s8"></div>
        ${icons2.map(ic)}
        <div class="sep s9"></div>
        ${icons3.map(ic)}
        ${sideLabels.map(l => html`<div class="tool ${l === "30" ? "sel" : ""}">${l}</div>`)}
      </div>
      <div class="wm">178448.COM</div>
      <div class="corner"></div>
    </div>`;
  }
}
